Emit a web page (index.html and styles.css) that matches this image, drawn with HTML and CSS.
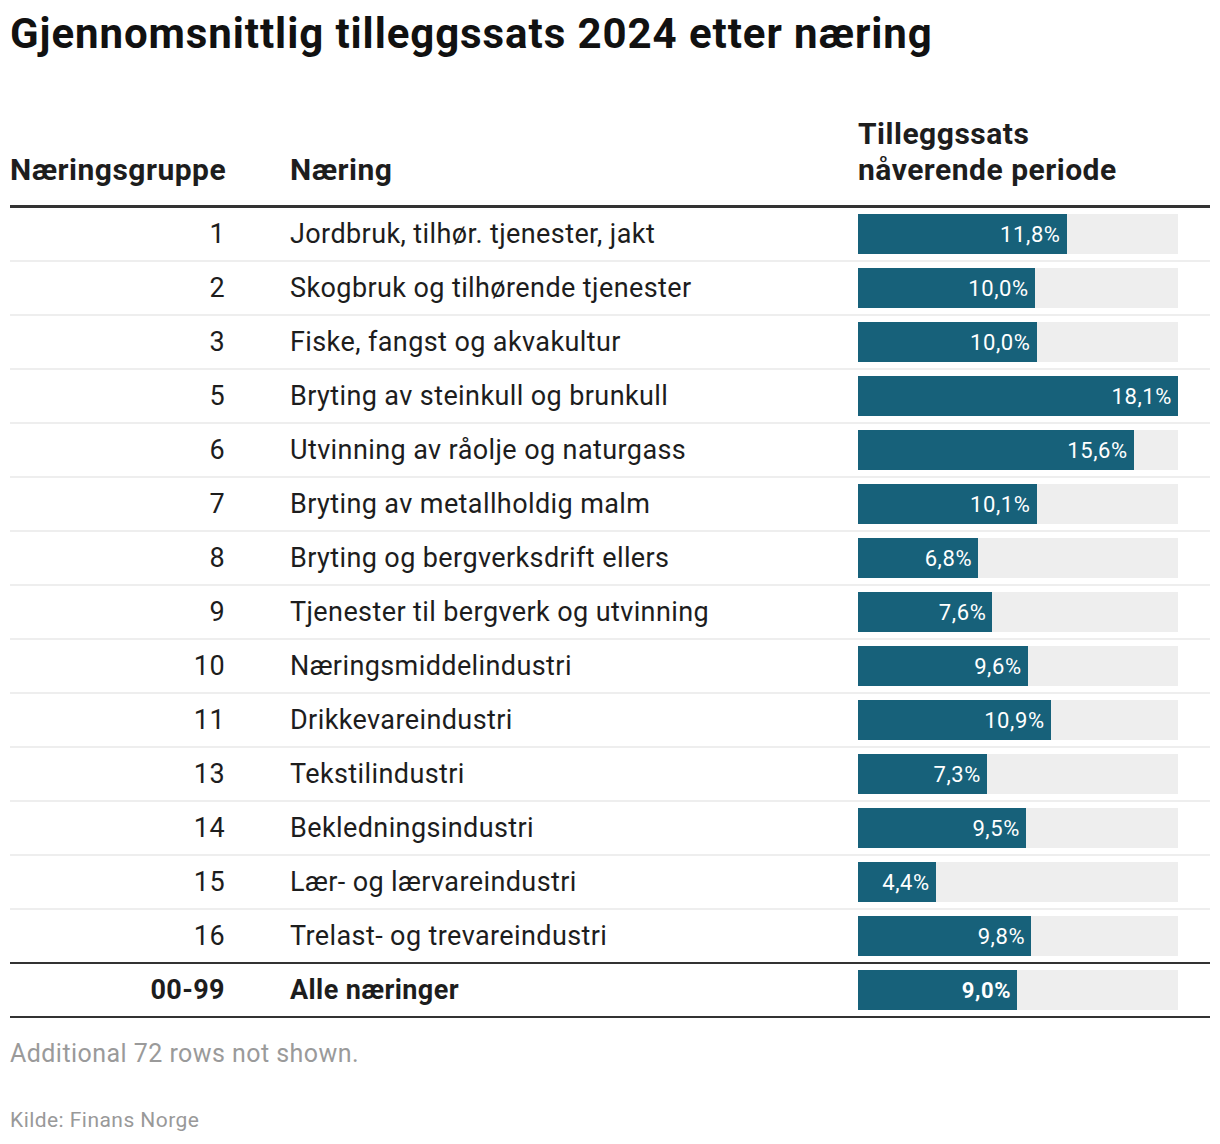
FILE: index.html
```html
<!DOCTYPE html>
<html lang="no">
<head>
<meta charset="utf-8">
<title>Gjennomsnittlig tilleggssats 2024 etter næring</title>
<link rel="stylesheet" href="styles.css">
</head>
<body>
<div class="chart">
  <h1 class="title">Gjennomsnittlig tilleggssats 2024 etter næring</h1>
  <div class="table">
    <div class="row head">
      <div class="c1">Næringsgruppe</div>
      <div class="c2">Næring</div>
      <div class="c3">Tilleggssats<br>nåverende periode</div>
    </div>
    <div class="row"><div class="c1">1</div><div class="c2">Jordbruk, tilhør. tjenester, jakt</div><div class="c3"><div class="track"><div class="bar" style="width:65.19%"><span>11,8%</span></div></div></div></div>
    <div class="row"><div class="c1">2</div><div class="c2">Skogbruk og tilhørende tjenester</div><div class="c3"><div class="track"><div class="bar" style="width:55.25%"><span>10,0%</span></div></div></div></div>
    <div class="row"><div class="c1">3</div><div class="c2">Fiske, fangst og akvakultur</div><div class="c3"><div class="track"><div class="bar" style="width:55.80%"><span>10,0%</span></div></div></div></div>
    <div class="row"><div class="c1">5</div><div class="c2">Bryting av steinkull og brunkull</div><div class="c3"><div class="track"><div class="bar" style="width:100%"><span>18,1%</span></div></div></div></div>
    <div class="row"><div class="c1">6</div><div class="c2">Utvinning av råolje og naturgass</div><div class="c3"><div class="track"><div class="bar" style="width:86.19%"><span>15,6%</span></div></div></div></div>
    <div class="row"><div class="c1">7</div><div class="c2">Bryting av metallholdig malm</div><div class="c3"><div class="track"><div class="bar" style="width:55.80%"><span>10,1%</span></div></div></div></div>
    <div class="row"><div class="c1">8</div><div class="c2">Bryting og bergverksdrift ellers</div><div class="c3"><div class="track"><div class="bar" style="width:37.57%"><span>6,8%</span></div></div></div></div>
    <div class="row"><div class="c1">9</div><div class="c2">Tjenester til bergverk og utvinning</div><div class="c3"><div class="track"><div class="bar" style="width:41.99%"><span>7,6%</span></div></div></div></div>
    <div class="row"><div class="c1">10</div><div class="c2">Næringsmiddelindustri</div><div class="c3"><div class="track"><div class="bar" style="width:53.04%"><span>9,6%</span></div></div></div></div>
    <div class="row"><div class="c1">11</div><div class="c2">Drikkevareindustri</div><div class="c3"><div class="track"><div class="bar" style="width:60.22%"><span>10,9%</span></div></div></div></div>
    <div class="row"><div class="c1">13</div><div class="c2">Tekstilindustri</div><div class="c3"><div class="track"><div class="bar" style="width:40.33%"><span>7,3%</span></div></div></div></div>
    <div class="row"><div class="c1">14</div><div class="c2">Bekledningsindustri</div><div class="c3"><div class="track"><div class="bar" style="width:52.49%"><span>9,5%</span></div></div></div></div>
    <div class="row"><div class="c1">15</div><div class="c2">Lær- og lærvareindustri</div><div class="c3"><div class="track"><div class="bar" style="width:24.31%"><span>4,4%</span></div></div></div></div>
    <div class="row last"><div class="c1">16</div><div class="c2">Trelast- og trevareindustri</div><div class="c3"><div class="track"><div class="bar" style="width:54.14%"><span>9,8%</span></div></div></div></div>
    <div class="row total"><div class="c1">00-99</div><div class="c2">Alle næringer</div><div class="c3"><div class="track"><div class="bar" style="width:49.72%"><span>9,0%</span></div></div></div></div>
  </div>
  <p class="note">Additional 72 rows not shown.</p>
  <p class="source">Kilde: Finans Norge</p>
</div>
</body>
</html>
```

FILE: styles.css
```css
html, body {
  margin: 0;
  padding: 0;
  background: #ffffff;
}

body {
  font-family: Roboto, "Liberation Sans", sans-serif;
  color: #1d1d1d;
}

.chart {
  padding: 0 10px;
}

.title {
  margin: 11px 0 0;
  font-size: 42px;
  line-height: 46px;
  font-weight: 700;
  letter-spacing: 0.92px;
  color: #111111;
}

.table {
  margin-top: 59px;
}

.row {
  display: grid;
  grid-template-columns: 280px 568px 320px 1fr;
  align-items: center;
  height: 52px;
  border-bottom: 2px solid #eeeeee;
  font-size: 27px;
  letter-spacing: 0.4px;
}

.c1 {
  text-align: right;
  padding-right: 65px;
}

.row.head {
  height: auto;
  align-items: end;
  font-weight: 700;
  font-size: 30px;
  line-height: 36px;
  letter-spacing: 0.5px;
  padding-bottom: 17px;
  border-bottom: 3px solid #333333;
}

.row.head .c1 {
  text-align: left;
}

.row.last {
  border-bottom-color: #333333;
}

.row.total {
  font-weight: 700;
  border-bottom: 2px solid #333333;
}

.track {
  height: 40px;
  background: #eeeeee;
}

.bar {
  height: 100%;
  background: #17617a;
  display: flex;
  align-items: center;
  justify-content: flex-end;
  box-sizing: border-box;
  padding-right: 6px;
  color: #ffffff;
  font-size: 22px;
  letter-spacing: 0.6px;
  white-space: nowrap;
}

.note {
  margin: 22px 0 0;
  font-size: 25px;
  line-height: 28px;
  letter-spacing: 0.45px;
  color: #9a9a9a;
}

.source {
  margin: 39px 0 0;
  font-size: 21px;
  line-height: 26px;
  letter-spacing: 0.45px;
  color: #999999;
}
```
